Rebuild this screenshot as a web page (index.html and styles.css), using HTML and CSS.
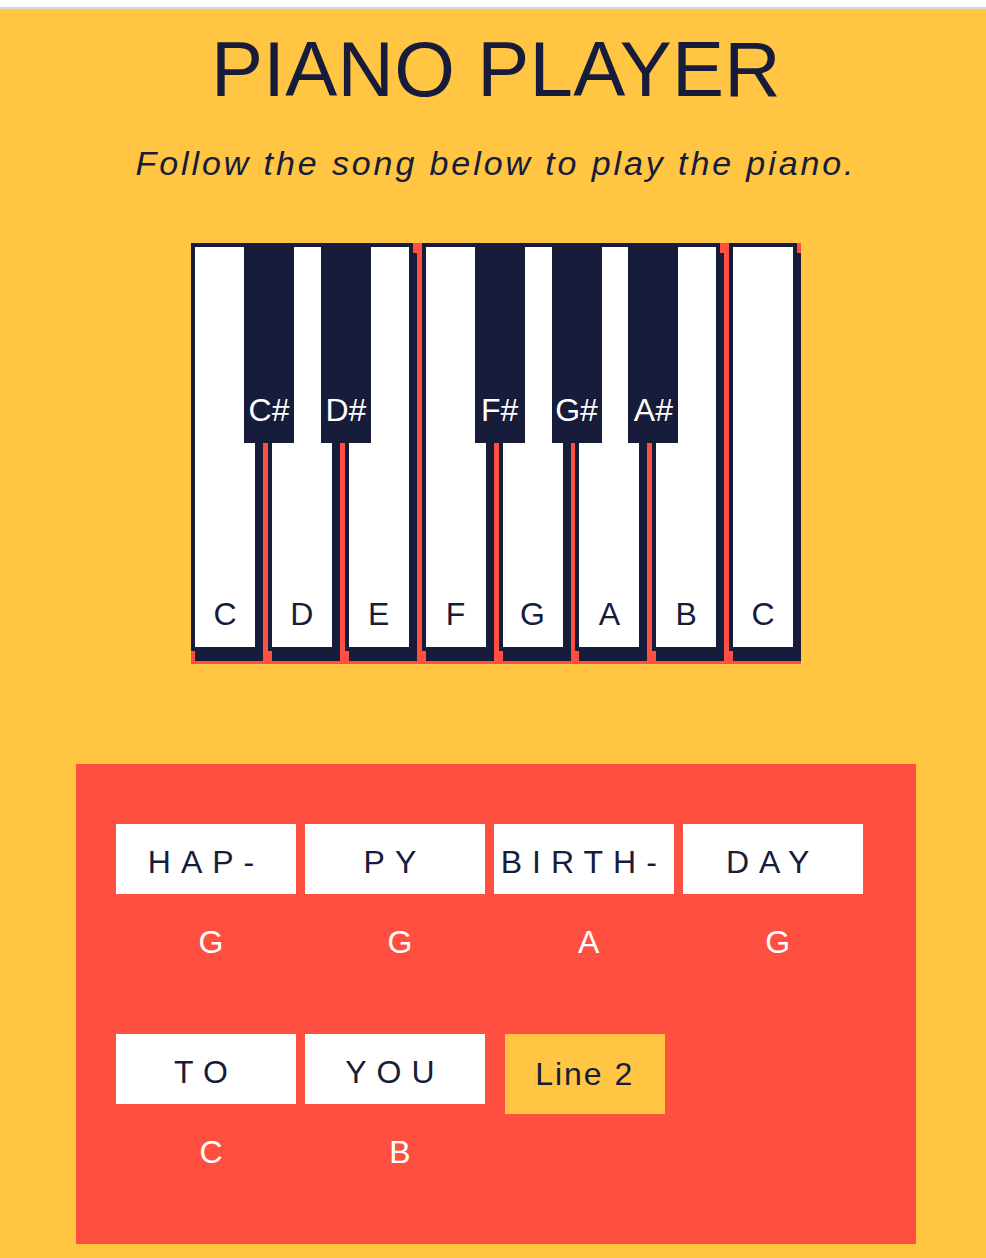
FILE: index.html
```
<!DOCTYPE html>
<html lang="en">
<head>
<meta charset="utf-8">
<title>Piano Player</title>
<link rel="stylesheet" href="styles.css">
</head>
<body>
<div class="page">
  <h1 class="title">PIANO PLAYER</h1>
  <p class="subtitle">Follow the song below to play the piano.</p>

  <div class="piano">
    <div class="white-key"><span class="label">C</span><div class="black-key"><span class="label">C#</span></div></div>
    <div class="white-key"><span class="label">D</span><div class="black-key"><span class="label">D#</span></div></div>
    <div class="white-key"><span class="label">E</span></div>
    <div class="white-key"><span class="label">F</span><div class="black-key"><span class="label">F#</span></div></div>
    <div class="white-key"><span class="label">G</span><div class="black-key"><span class="label">G#</span></div></div>
    <div class="white-key"><span class="label">A</span><div class="black-key"><span class="label">A#</span></div></div>
    <div class="white-key"><span class="label">B</span></div>
    <div class="white-key"><span class="label">C</span></div>
  </div>

  <div class="song">
    <div class="lyric-row">
      <div class="syllable"><div class="lyric">HAP-</div><div class="note">G</div></div>
      <div class="syllable"><div class="lyric">PY</div><div class="note">G</div></div>
      <div class="syllable"><div class="lyric">BIRTH-</div><div class="note">A</div></div>
      <div class="syllable"><div class="lyric">DAY</div><div class="note">G</div></div>
    </div>
    <div class="lyric-row">
      <div class="syllable"><div class="lyric">TO</div><div class="note">C</div></div>
      <div class="syllable"><div class="lyric">YOU</div><div class="note">B</div></div>
      <button class="line-button" type="button">Line 2</button>
    </div>
  </div>
</div>
</body>
</html>
```
FILE: styles.css
```
html, body {
  margin: 0;
  padding: 0;
}

body {
  background: #ffffff;
  padding-top: 7px;
  font-family: "Liberation Sans", Arial, sans-serif;
  color: #161c3a;
}

.page {
  box-sizing: border-box;
  min-height: calc(100vh - 7px);
  border-top: 2px solid #d9d9d9;
  background: #ffc543;
  padding: 0 0 14px 6px;
  display: flex;
  flex-direction: column;
  align-items: center;
}

.title {
  margin: 21px 0 0;
  font-size: 78px;
  line-height: 78px;
  font-weight: 400;
  letter-spacing: 0.3px;
  color: #161c3a;
}

.subtitle {
  margin: 38px 0 0;
  font-size: 34px;
  line-height: 34px;
  font-style: italic;
  letter-spacing: 2.9px;
  color: #161c3a;
}

.piano {
  margin-top: 63px;
  width: 610px;
  height: 421px;
  background: #ff4f40;
  display: flex;
  gap: 8.89px;
  align-items: flex-start;
}

.white-key {
  position: relative;
  flex: none;
  width: 60px;
  height: 400px;
  background: #ffffff;
  border: 4px solid #161c3a;
  box-shadow: 4px 10px 0 #161c3a;
  display: flex;
  flex-direction: column;
  justify-content: flex-end;
  align-items: center;
}

.white-key > .label {
  display: block;
  font-size: 32px;
  line-height: 32px;
  color: #161c3a;
  margin-bottom: 17px;
}

.black-key {
  position: absolute;
  z-index: 1;
  top: -4px;
  left: 49px;
  width: 50px;
  height: 200px;
  background: #161c3a;
  display: flex;
  flex-direction: column;
  justify-content: flex-end;
  align-items: center;
}

.black-key > .label {
  display: block;
  font-size: 32px;
  line-height: 32px;
  color: #ffffff;
  margin-bottom: 17px;
}

.song {
  margin-top: 100px;
  width: 840px;
  box-sizing: border-box;
  background: #ff4f40;
  padding: 60px 40px 76px;
  display: flex;
  flex-direction: column;
  gap: 76px;
}

.lyric-row {
  display: flex;
  gap: 8.89px;
  align-items: flex-start;
}

.syllable {
  width: 180px;
  display: flex;
  flex-direction: column;
}

.lyric {
  box-sizing: border-box;
  height: 70px;
  padding-top: 6px;
  background: #ffffff;
  text-align: center;
  font-size: 32px;
  line-height: 64px;
  letter-spacing: 10px;
  color: #161c3a;
}

.note {
  margin-top: 32px;
  padding-left: 10px;
  text-align: center;
  font-size: 32px;
  line-height: 32px;
  color: #ffffff;
}

.line-button {
  margin-left: 11px;
  width: 160px;
  height: 80px;
  padding: 0;
  border: none;
  background: #ffc543;
  color: #161c3a;
  font-family: "Liberation Sans", Arial, sans-serif;
  font-size: 32px;
  line-height: 80px;
  letter-spacing: 2px;
}
```
